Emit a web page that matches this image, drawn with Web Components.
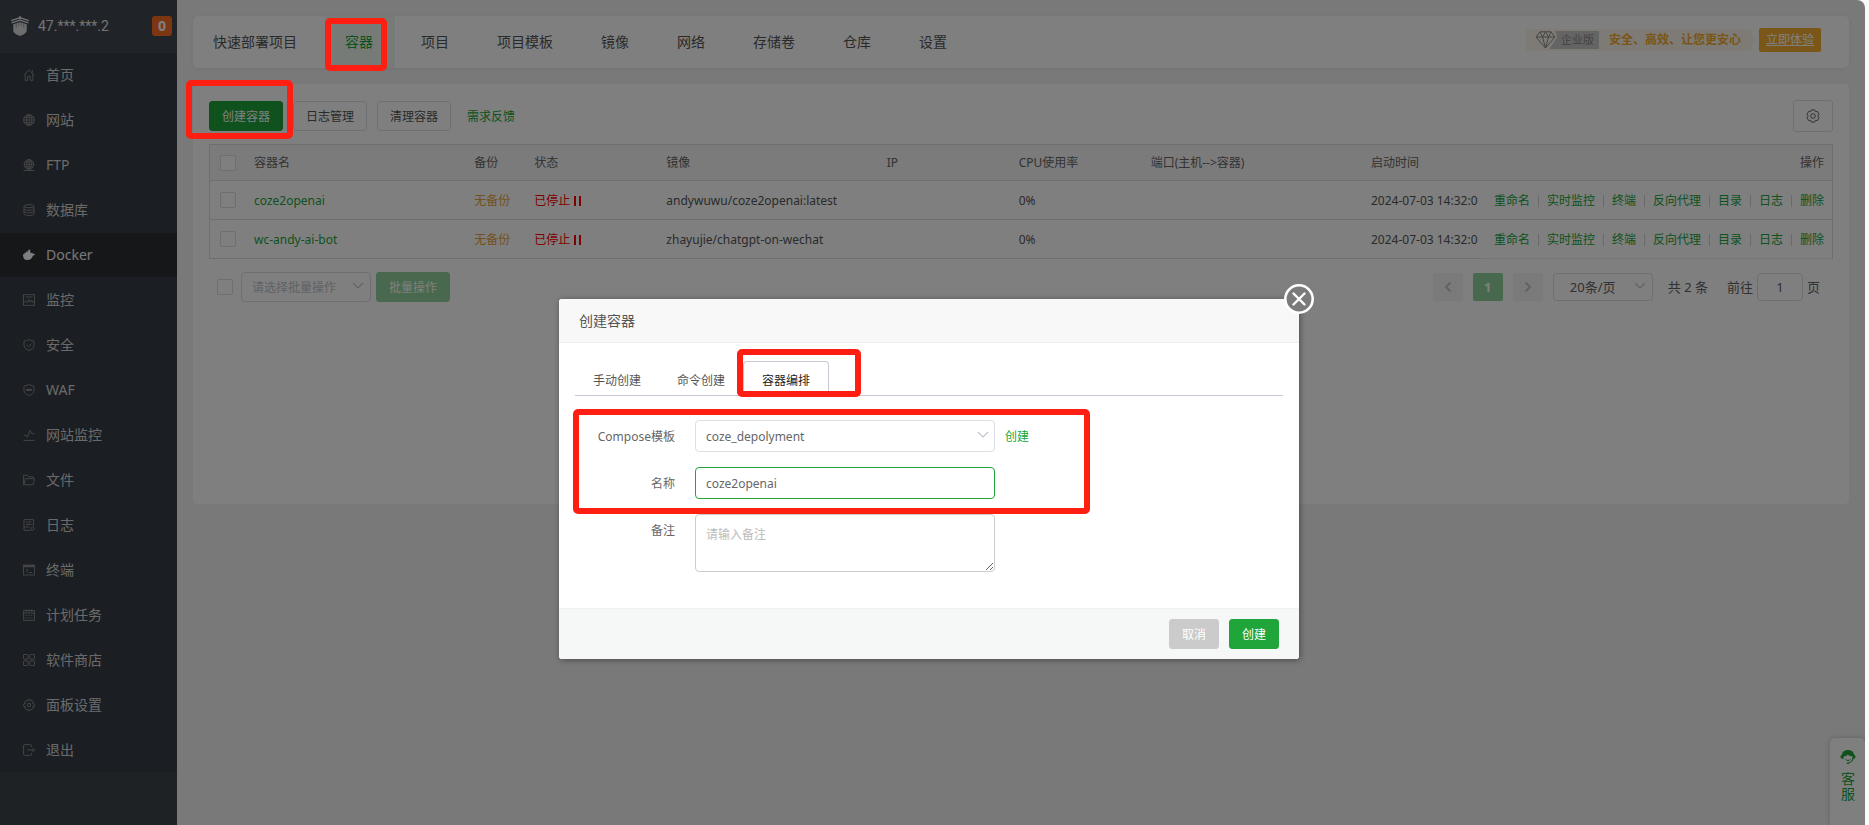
<!DOCTYPE html>
<html lang="zh-CN">
<head>
<meta charset="utf-8">
<title>Docker - 容器</title>
<style>
  body {
    margin: 0;
    background: #fbfbfb;
    font: 12px/20px "Noto Sans", "Noto Sans CJK SC", sans-serif;
    color: #555;
    --green: #20a53a;
    --line: #dcdfe6;
  }
</style>
</head>
<body>
<app-shell>
  <side-nav slot="side"></side-nav>
  <top-tabs></top-tabs>
  <container-panel></container-panel>
  <support-tab slot="float"></support-tab>
  <create-dialog slot="dialog"></create-dialog>
  <mark-box slot="marks" style="left:325px;top:18px;width:62px;height:53px"></mark-box>
  <mark-box slot="marks" style="left:186px;top:80px;width:107px;height:59px"></mark-box>
</app-shell>

<script>
const base = `
  :host, *, *::before, *::after { box-sizing: border-box; }
  :host { display: block; }
  button, input, select, textarea { font: inherit; color: inherit; margin: 0; }
  a { color: var(--green); text-decoration: none; }
  svg { display: block; }
  input[type=checkbox] {
    appearance: none; width: 16px; height: 16px; border: 1px solid #dcdfe6;
    border-radius: 2px; background: #fff; display: block;
  }
`;
function define(name, css, html) {
  customElements.define(name, class extends HTMLElement {
    constructor() {
      super();
      this.attachShadow({ mode: "open" }).innerHTML = `<style>${base}${css}</style>${html}`;
    }
  });
}

/* Page frame: sidebar, content column, dimming layer, floating parts */
define("app-shell", `
  :host { position: relative; display: flex; min-height: 100vh; margin-right: 4px;
    background: #f2f2f2; border-radius: 0 8px 0 0; overflow: hidden; }
  main { flex: 1; min-width: 0; padding: 16px; display: flex; flex-direction: column; gap: 16px; }
  .shade { position: absolute; inset: 0; background: rgba(0,0,0,.5); pointer-events: none; }
`, `<slot name="side"></slot><main><slot></slot></main><slot name="float"></slot>
  <div class="shade"></div><slot name="dialog"></slot><slot name="marks"></slot>`);

/* Red highlight frame */
define("mark-box", `
  :host { position: absolute; border: 6px solid #ff1f12; border-radius: 5px; pointer-events: none; z-index: 5; }
`, ``);

/* Sidebar */
const icons = {
  home: `<path d="M.7 6.3 6 .9l5.3 5.4M2.2 5.4v6h2.5V7.6h2.6v3.8h2.5v-6M9.3 1.2v2.4"/>`,
  web: `<circle cx="6" cy="6" r="5.4"/><path d="M.6 6h10.8M6 .6v10.8M1.4 3.3h9.2M1.4 8.7h9.2"/><ellipse cx="6" cy="6" rx="2.8" ry="5.4"/>`,
  ftp: `<circle cx="6" cy="5.4" r="4.8"/><ellipse cx="6" cy="5.4" rx="2.3" ry="4.8"/><path d="M1.2 5.4h9.6M6 .6v9.6M1.8 3h8.4M1.8 7.8h8.4M.5 11.5h11"/>`,
  db: `<ellipse cx="6" cy="2.2" rx="5" ry="1.6"/><path d="M1 2.2v7.6c0 2.2 10 2.2 10 0V2.2M1 4.8c0 2 10 2 10 0M1 7.3c0 2 10 2 10 0"/>`,
  docker: `<path fill="currentColor" stroke="none" d="M0 5.300h1.400V3.700h1.800V2.400h2V.7h2v3h1.600v1.300c.5-.1.7-.6.5-1.600.7.300 1 .9 1 1.500.7-.2 1.300 0 1.700.3-.3.8-.9 1.200-1.900 1.200-1.200 3.100-2.900 4.500-5.500 4.500C1.500 11.300-.2 9 0 5.300z"/>`,
  monitor: `<rect x=".5" y=".7" width="11" height="10.600"/><path d="M2.500 3h7M.8 8.200l2-1 1.500 1.500L5.800 5.500l1.500 2.800L8.800 6l1 2.200h1.500"/>`,
  shield: `<path d="M6 .6 11 2.300v4.200c0 2.500-2.500 4-5 5-2.500-1-5-2.500-5-5V2.300zM3.700 5.900l1.800 1.700 3-3"/>`,
  waf: `<path d="M6 .6 11 2.300v4.200c0 2.500-2.500 4-5 5-2.500-1-5-2.500-5-5V2.300z"/><path stroke-width="2" d="M3.200 5.900h5.600"/>`,
  pulse: `<path d="M.5 11.400h11M.8 6.300h2.100l1.500 2L7 1.300l1.600 3.400h2.900"/>`,
  folder: `<path d="M.6 10.800V1.200h3.800l1.200 1.600h4.600V4.600M.6 10.800h9.600l1.300-6.200H2.400L1.100 10"/>`,
  log: `<path d="M8 11.400H1V.6h9.500v6.500M3 3h5.500M3 5.500h5.500M1 8h5.500"/><circle cx="9.600" cy="9.600" r="1.500"/>`,
  term: `<rect x=".5" y="1" width="11" height="10"/><path stroke-width="2" d="M.5 2.200h11"/><path d="m3 5 2 1.600L3 8.300M6 8.500h3"/>`,
  cal: `<path d="M.6 1.600h10.800v9.800H.6zM.6 4h10.800M3.300.3v2.400M8.700.3v2.400M6 .3v2.400M2.500 6.300h1.600m1.100 0h1.600m1.100 0h1.600M2.500 8.900h1.600m1.100 0h1.600m1.100 0h1.600"/>`,
  apps: `<rect x=".5" y=".5" width="4.600" height="4.600" rx=".6"/><rect x="6.900" y=".5" width="4.600" height="4.600" rx=".6"/><rect x=".5" y="6.900" width="4.600" height="4.600" rx=".6"/><rect x="6.900" y="6.900" width="4.600" height="4.600" rx=".6"/>`,
  gear: `<circle cx="6" cy="6" r="1.700"/><path d="M4.900.7h2.200l.4 1.300 1.200-.7 1.700 1.600-.8 1.400 1.700.6v2.300l-1.700.5.8 1.400-1.700 1.600-1.200-.7-.4 1.400H4.900L4.500 10l-1.200.7-1.700-1.600.8-1.400-1.700-.5V4.900l1.700-.6-.8-1.400 1.700-1.600 1.200.7z"/>`,
  exit: `<path d="M8.500 3V1.200L7.800.6H1.200L.6 1.200v9.600l.6.600h6.600l.7-.6V9M4 6h7.300M9.300 3.900 11.400 6 9.300 8.100"/>`
};
const icon = k => `<svg width="12" height="12" viewBox="0 0 12 12" fill="none" stroke="currentColor" stroke-width=".9" aria-hidden="true">${icons[k]}</svg>`;
const menu = [["home","首页"],["web","网站"],["ftp","FTP"],["db","数据库"],["docker","Docker"],["monitor","监控"],
  ["shield","安全"],["waf","WAF"],["pulse","网站监控"],["folder","文件"],["log","日志"],["term","终端"],
  ["cal","计划任务"],["apps","软件商店"],["gear","面板设置"],["exit","退出"]];
define("side-nav", `
  :host { width: 177px; flex: none; background: #3e444b; color: #d5d5d5; font-size: 14px; }
  header { height: 53px; display: flex; align-items: center; padding: 0 5px 0 11px; gap: 9px; background: #40464e; }
  header > * { margin-bottom: 2px; }
  .ip { flex: 1; font-family: Roboto, sans-serif; color: #e6e6e6; }
  .count { width: 20px; height: 20px; border-radius: 3px; background: #fb6d25; color: #fff;
    font-weight: bold; text-align: center; line-height: 20px; }
  nav { background: #363c45; }
  a { display: flex; align-items: center; gap: 11px; height: 44px; margin-bottom: 1px; padding-left: 23px; color: inherit; }
  a svg { color: #8f8f8f; }
  a.on { background: #2d2e33; color: #eee; }
  a.on svg { color: #fff; }
`, `
  <header>
    <svg width="18" height="20" viewBox="0 0 18 20" fill="none" stroke="#e8e8e8" aria-hidden="true">
      <path d="M9 0v3M0 4.600 9 1.600l9 3M.6 6.800 9 4.200l8.400 2.600" stroke-width="1.300"/>
      <path d="M2.300 8.200 9 6.200l6.700 2v6.300c0 2.600-3.500 4.400-6.700 5.500-3.200-1.100-6.700-2.900-6.700-5.500z" fill="#dcdcdc" stroke="none"/>
      <path d="M5.200 7v5M7.700 6v4M10.300 6v4M12.800 7v5" stroke="#8c9092" stroke-width=".8"/>
    </svg>
    <span class="ip">47.***.***.2</span><span class="count">0</span>
  </header>
  <nav>${menu.map(([k, t]) => `<a href="#"${k === "docker" ? ' class="on" aria-current="page"' : ""}>${icon(k)}<span>${t}</span></a>`).join("")}</nav>`);

/* Top tabs with the upgrade banner */
define("top-tabs", `
  :host { display: flex; justify-content: space-between; height: 52px; background: #fff; border-radius: 5px;
    box-shadow: 0 1px 4px rgba(0,0,0,.06); overflow: hidden; font-size: 14px; }
  nav { display: flex; gap: 6px; }
  nav a { display: flex; align-items: center; padding: 0 22px 0 20px; color: #555; white-space: nowrap; }
  nav a.on { background: #edf7ef; color: var(--green); }
  .promo { display: flex; align-items: center; gap: 8px; margin: 12px 28px 16px 0; font-size: 12px; }
  .strip { position: relative; display: flex; align-items: center; height: 22px; padding: 0 10px; gap: 10px; background: #fdf5ea; color: #f3ac2e; font-weight: bold; }
  .strip::after { content: ""; position: absolute; left: 100%; top: 5px; border: 6px solid transparent; border-left-color: #fdf5ea; border-right: 0; }
  .tag { position: relative; height: 18px; line-height: 18px; margin-left: 14px; padding: 0 5px 0 11px; background: #c9c9c9;
    color: #858585; font-size: 11px; font-weight: normal; }
  .tag svg { position: absolute; left: -15px; top: 0; }
  .try { height: 24px; line-height: 24px; padding: 0 7px; border-radius: 2px; background: #f5ae30; color: #fff; text-decoration: underline; }
`, `
  <nav>${["快速部署项目","容器","项目","项目模板","镜像","网络","存储卷","仓库","设置"]
    .map(t => `<a href="#"${t === "容器" ? ' class="on"' : ""}>${t}</a>`).join("")}</nav>
  <div class="promo"><div class="strip"><span class="tag"><svg width="22" height="18" viewBox="0 0 22 18" fill="#fdf5ea" stroke="#8a8a8a" aria-hidden="true">
    <path stroke="none" d="M0 0h20l2.500 6L15 17l-3 1z"/><path d="M5 .8h11l4 5.200-9.500 11L1 6zM1 6h19M5 .8 7.500 6l3 11 3-11L16 .8M7.500 6l3-5.200 3 5.200"/></svg>企业版</span>
    <span>安全、高效、让您更安心</span></div><a class="try" href="#">立即体验</a></div>`);

/* Push button; kind = primary | soft | grey, plain when absent */
define("ui-button", `
  button { display: flex; align-items: center; justify-content: center; height: 30px; padding: 2px 12px 0; border: 1px solid var(--line);
    border-radius: 3px; background: #fff; color: #555; white-space: nowrap; }
  :host([kind]) button { color: #fff; }
  :host([kind=primary]) button { background: var(--green); border-color: var(--green); }
  :host([kind=soft]) button { background: #90d29d; border-color: #90d29d; }
  :host([kind=grey]) button { background: #cbcbcb; border-color: #cbcbcb; }
  :host([square]) button { width: 40px; height: 32px; padding: 0; }
`, `<button type="button"><slot></slot></button>`);

const chevron = `<svg width="12" height="8" viewBox="0 0 12 8" fill="none" stroke="#c0c4cc" stroke-width="1.200" aria-hidden="true"><path d="m1 1 5 5 5-5"/></svg>`;
const pickCss = `
  .pick { position: relative; }
  .pick select { appearance: none; width: 100%; height: 100%; padding: 2px 30px 0 10px; border: 1px solid var(--line); border-radius: 4px; background: #fff; }
  .pick svg { position: absolute; right: 7px; top: calc(50% - 5px); pointer-events: none; }
`;

/* Container list */
const ops = ["重命名","实时监控","终端","反向代理","目录","日志","删除"].map(t => `<a href="#">${t}</a>`).join("");
const row = (name, image) => `<tr><td><input type="checkbox" aria-label="${name}"></td><td><a href="#">${name}</a></td>
  <td class="warn">无备份</td><td class="stop"><span>已停止<svg width="8" height="10" viewBox="0 0 8 10" aria-hidden="true"><path d="M0 0h2v10H0zM5 0h2v10H5z" fill="#f00"/></svg></span></td>
  <td>${image}</td><td></td><td>0%</td><td></td><td>2024-07-03 14:32:0</td><td class="ops"><div>${ops}</div></td></tr>`;
define("container-panel", `
  ${pickCss}
  :host { min-height: 420px; padding: 16px; background: #fff; border-radius: 5px; }
  .bar { display: flex; align-items: center; gap: 10px; margin-bottom: 12px; }
  .bar > a { margin-left: 6px; padding-top: 2px; flex: 1; }
  table { width: 100%; table-layout: fixed; border-collapse: separate; border-spacing: 0; border: 1px solid #dcdcdf; border-bottom: 0; }
  th, td { padding: 2px 0 0 12px; height: 39px; border-bottom: 1px solid #dcdcdf; text-align: left; font-weight: normal; white-space: nowrap; overflow: hidden; }
  th { height: 36px; padding-top: 0; background: #f6f6f6; color: #666; }
  th:first-child, td:first-child { padding: 0 0 0 10px; }
  th:last-child { text-align: right; padding-right: 8px; }
  tr:last-child .ops { border-bottom-color: #ebeef5; }
  .warn { color: #e6a23c; }
  .stop { color: #f00; }
  .stop span { display: flex; align-items: center; gap: 4px; }
  .ops { padding: 2px 8px 0 0; }
  .ops div { display: flex; justify-content: flex-end; align-items: center; }
  .ops a + a { margin-left: 8px; padding-left: 8px; border-left: 1px solid #d4d4d4; line-height: 12px; }
  .foot { display: flex; align-items: center; justify-content: space-between; margin-top: 13px; }
  .batch, .pager { display: flex; align-items: center; }
  .batch { gap: 5px; padding-left: 8px; }
  .batch .pick { width: 130px; height: 30px; margin-left: 3px; }
  .batch select { color: #c0c4cc; opacity: 1; }
  .pager { gap: 10px; margin-right: 13px; font-size: 13px; color: #606266; }
  .pager button { width: 30px; height: 28px; padding: 0; border: 0; border-radius: 2px; background: #f4f4f5; color: #c0c4cc; display: flex; align-items: center; justify-content: center; }
  .pager .now { background: #90d29d; color: #fff; font-weight: bold; }
  .pager .pick { width: 100px; height: 28px; }
  .pager select { padding: 0 30px 0 16px; }
  .total { margin: 0 9px 0 5px; }
  label { display: flex; align-items: center; gap: 4px; }
  label input { width: 46px; height: 28px; border: 1px solid var(--line); border-radius: 4px; text-align: center; background: #fff; }
`, `
  <div class="bar"><ui-button kind="primary">创建容器</ui-button><ui-button>日志管理</ui-button><ui-button>清理容器</ui-button>
    <a href="#">需求反馈</a><ui-button square><svg width="14" height="14" viewBox="0 0 14 14" fill="none" stroke="#666" aria-label="设置"><circle cx="7" cy="7" r="2.300"/>
    <path d="M5.400.9h3.200l.8 1.800 2-.2 1.600 2.800L11.800 7l1.200 1.700-1.600 2.800-2-.2-.8 1.800H5.400l-.8-1.800-2 .2L1 8.700 2.200 7 1 5.300l1.600-2.800 2 .2z"/></svg></ui-button></div>
  <table>
    <colgroup><col style="width:32px"><col><col style="width:60px"><col style="width:132px"><col><col style="width:132px"><col style="width:132px"><col><col style="width:123px"><col style="width:350px"></colgroup>
    <thead><tr><th><input type="checkbox" aria-label="全选"></th>${["容器名","备份","状态","镜像","IP","CPU使用率","端口(主机--&gt;容器)","启动时间","操作"].map(t => `<th>${t}</th>`).join("")}</tr></thead>
    <tbody>${row("coze2openai", "andywuwu/coze2openai:latest")}${row("wc-andy-ai-bot", "zhayujie/chatgpt-on-wechat")}</tbody>
  </table>
  <div class="foot">
    <div class="batch"><input type="checkbox" aria-label="全选"><div class="pick"><select aria-label="批量操作" disabled><option>请选择批量操作</option></select>${chevron}</div><ui-button kind="soft">批量操作</ui-button></div>
    <div class="pager">
      <button aria-label="上一页"><svg width="8" height="12" viewBox="0 0 8 12" fill="none" stroke="currentColor" stroke-width="1.800"><path d="M6.500 1.500 2 6l4.500 4.500"/></svg></button>
      <button class="now">1</button>
      <button aria-label="下一页"><svg width="8" height="12" viewBox="0 0 8 12" fill="none" stroke="currentColor" stroke-width="1.800"><path d="M1.500 1.500 6 6l-4.500 4.500"/></svg></button>
      <div class="pick"><select aria-label="每页条数"><option>20条/页</option></select>${chevron}</div>
      <span class="total">共 2 条</span><label>前往<input value="1">页</label>
    </div>
  </div>`);

/* Customer service tab at the window's lower right */
define("support-tab", `
  :host { position: absolute; right: 0; bottom: 0; width: 35px; height: 87px; padding: 12px 9px 0 10px; background: #fff; border-radius: 5px 5px 0 0;
    box-shadow: 0 0 5px rgba(0,0,0,.2); }
  a { display: flex; flex-direction: column; align-items: center; gap: 7px; font-size: 14px; line-height: 15px; width: 16px; text-align: center; }
`, `<a href="#"><svg width="16" height="14" viewBox="0 0 16 14" aria-hidden="true"><path fill="#20a53a" d="M8 0c3.600 0 5.800 2 6.100 4.800.9.300 1.400 1 1.400 1.900 0 1.200-.8 2-1.900 2.100-.8 2.400-2.600 4.100-4.700 4.400v.8H7v-1.500c2.600.3 4.700-1.200 5.400-3.900V6.300C10 6 8.600 5.500 7.800 4.500 7 5.700 5.600 6.400 3.600 6.600v2.200C1.500 9 .5 8 .5 6.700c0-.9.5-1.600 1.400-1.900C2.200 2 4.400 0 8 0z"/><path d="M5.500 9.500c1.500 1.300 3.500 1.300 5 0" stroke="#20a53a" fill="none"/></svg><span>客服</span></a>`);

/* Dialog: create container */
define("create-dialog", `
  ${pickCss}
  :host { position: absolute; inset: 0; display: flex; justify-content: center; align-items: flex-start; padding: 299px 7px 0 0; }
  section { position: relative; width: 740px; background: #fff; border-radius: 3px; box-shadow: 1px 1px 6px rgba(0,0,0,.4); }
  h2 { margin: 0; height: 44px; padding-left: 20px; font-size: 14px; line-height: 43px; font-weight: normal; color: #555;
    background: #f8f8f8; border-bottom: 1px solid #eee; border-radius: 3px 3px 0 0; }
  .close { position: absolute; right: -15px; top: -15px; width: 30px; height: 30px; padding: 0; border: 0; background: none; }
  .tabs { display: flex; margin: 18px 16px 0; border-bottom: 1px solid #c8c9d4; }
  .tabs button { height: 34px; padding: 5px 18px 0; border: 0; background: none; color: #555; }
  .tabs button.on { margin-bottom: -1px; height: 35px; padding-top: 3px; border: 1px solid #c8c9d4; border-bottom: 0; border-radius: 4px 4px 0 0; background: #fff; color: #222; }
  form { display: grid; grid-template-columns: 100px 300px auto; column-gap: 20px; row-gap: 15px; padding: 24px 16px 36px; align-items: start; }
  label { text-align: right; height: 32px; line-height: 34px; color: #666; }
  form a { margin-left: -10px; height: 32px; line-height: 34px; }
  .pick { height: 32px; }
  .pick svg { right: 6px; }
  label[for] { grid-column: 1; }
  input, textarea { width: 100%; height: 32px; padding: 0 10px; border: 1px solid var(--green); border-radius: 4px; background: #fff; display: block; outline: 0; }
  input, textarea, select { color: #666; }
  textarea { height: 58px; padding: 10px; line-height: 20px; border-color: #ccc; }
  ::placeholder { color: #bbb; opacity: 1; }
  footer { display: flex; justify-content: flex-end; gap: 10px; padding: 10px 20px; border-top: 1px solid #edf1f2; background: #f6f8f8; border-radius: 0 0 3px 3px; }
`, `
  <section role="dialog" aria-labelledby="t">
    <h2 id="t">创建容器</h2>
    <button class="close" aria-label="关闭"><svg width="30" height="30" viewBox="0 0 30 30"><circle cx="15" cy="15" r="13.700" fill="#7b7b7b" stroke="#fff" stroke-width="2.600"/><path d="m9.500 9.500 11 11m0-11-11 11" stroke="#fff" stroke-width="2.400" stroke-linecap="round"/></svg></button>
    <div class="tabs"><button>手动创建</button><button>命令创建</button><button class="on">容器编排</button></div>
    <form>
      <label for="tpl">Compose模板</label><div class="pick"><select id="tpl"><option>coze_depolyment</option></select>${chevron}</div><a href="#">创建</a>
      <label for="name">名称</label><input id="name" value="coze2openai">
      <label for="note">备注</label><textarea id="note" placeholder="请输入备注"></textarea>
    </form>
    <footer><ui-button kind="grey">取消</ui-button><ui-button kind="primary">创建</ui-button></footer>
    <mark-box style="left:178px;top:50px;width:124px;height:48px"></mark-box>
    <mark-box style="left:14px;top:110px;width:517px;height:105px"></mark-box>
  </section>`);
</script>
</body>
</html>
